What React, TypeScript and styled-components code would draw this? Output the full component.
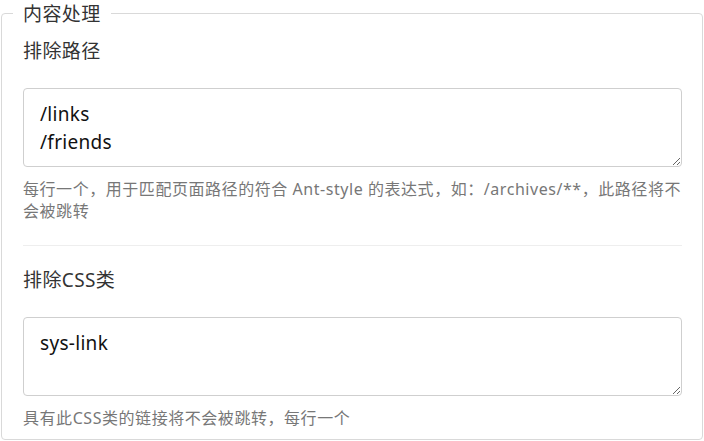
import React from "react";
import styled, { createGlobalStyle } from "styled-components";

const GlobalStyle = createGlobalStyle`
  html, body {
    margin: 0;
    padding: 0;
    background: #ffffff;
  }
  body {
    font-family: "Noto Sans", "Noto Sans CJK SC", sans-serif;
  }
  * { box-sizing: border-box; }
`;

const Page = styled.div`
  padding: 0 1px;
  width: 704px;
`;

const Fieldset = styled.fieldset`
  margin: 0;
  padding: 0 20px 10px 21px;
  border: 1px solid #d9d9d9;
  border-radius: 4px;
  min-width: 0;
`;

const Legend = styled.legend`
  margin-left: -10px;
  padding: 0 10px;
  font-size: 19px;
  letter-spacing: 0.4px;
  line-height: 26px;
  color: #333333;
  font-family: "Noto Sans CJK SC", sans-serif;
`;

const Field = styled.div<{ $first?: boolean }>`
  display: flex;
  flex-direction: column;
  padding-top: ${(p) => (p.$first ? "12px" : "21px")};
`;

const Label = styled.label`
  font-size: 19px;
  letter-spacing: 0.4px;
  line-height: 27px;
  color: #333333;
  margin-bottom: 23px;
  font-family: "Noto Sans", "Noto Sans CJK SC", sans-serif;
`;

const TextArea = styled.textarea`
  display: block;
  width: 100%;
  height: 79px;
  margin: 0;
  padding: 11px 16px 9px;
  border: 1px solid #cfcfcf;
  border-radius: 4px;
  font-family: "Noto Sans", "Noto Sans CJK SC", sans-serif;
  font-size: 19px;
  letter-spacing: 0.3px;
  line-height: 28px;
  color: #111111;
  resize: vertical;
  outline: none;
  overflow: hidden;
`;

const Help = styled.p`
  margin: 11px 0 0;
  font-size: 16px;
  letter-spacing: 0.55px;
  line-height: 22px;
  color: #777777;
  font-family: "Noto Sans", "Noto Sans CJK SC", sans-serif;
`;

const Divider = styled.hr`
  margin: 23px 0 0;
  border: 0;
  border-top: 1px solid #eeeeee;
`;

export default function App() {
  return (
    <Page>
      <GlobalStyle />
      <Fieldset>
        <Legend>内容处理</Legend>
        <Field $first>
          <Label>排除路径</Label>
          <TextArea defaultValue={"/links\n/friends"} />
          <Help>
            每行一个，用于匹配页面路径的符合 Ant-style 的表达式，如：/archives/**，此路径将不会被跳转
          </Help>
        </Field>
        <Divider />
        <Field>
          <Label>排除CSS类</Label>
          <TextArea defaultValue={"sys-link"} />
          <Help>具有此CSS类的链接将不会被跳转，每行一个</Help>
        </Field>
      </Fieldset>
    </Page>
  );
}
